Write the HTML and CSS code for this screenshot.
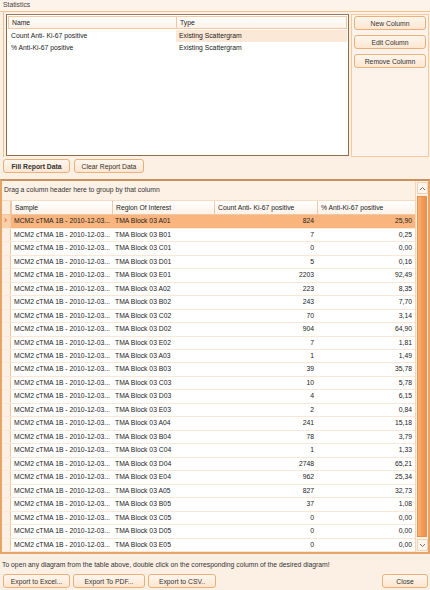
FILE: index.html
```html
<!DOCTYPE html>
<html>
<head>
<meta charset="utf-8">
<link rel="stylesheet" href="styles.css">
</head>
<body>
<div class="form">
  <div class="title">Statistics</div>
  <div class="stats">
    <div class="list">
      <div class="lhead">
        <div class="lh c-name">Name</div>
        <div class="lh c-type">Type</div>
      </div>
      <div class="lrow">
        <div class="lc c-name">Count Anti- Ki-67 positive</div>
        <div class="lc c-type focus">Existing Scattergram</div>
      </div>
      <div class="lrow">
        <div class="lc c-name">% Anti-Ki-67 positive</div>
        <div class="lc c-type">Existing Scattergram</div>
      </div>
    </div>
    <div class="side">
      <button class="btn side-btn">New Column</button>
      <button class="btn side-btn">Edit Column</button>
      <button class="btn side-btn">Remove Column</button>
    </div>
  </div>
  <div class="toolbar">
    <button class="btn bold w67">Fill Report Data</button>
    <button class="btn w70">Clear Report Data</button>
  </div>
  <div class="grid">
    <div class="gmain">
      <div class="groupby">Drag a column header here to group by that column</div>
      <div class="ghead">
        <div class="gi"></div>
        <div class="gh s">Sample</div>
        <div class="gh r">Region Of Interest</div>
        <div class="gh n">Count Anti- Ki-67 positive</div>
        <div class="gh p">% Anti-Ki-67 positive</div>
      </div>
      <div class="gbody" id="gbody"></div>
    </div>
    <div class="vscroll">
      <div class="arrow up"><svg width="7" height="5" viewBox="0 0 7 5"><path d="M1 4 L3.5 1.5 L6 4" fill="none" stroke="#7a6a5a" stroke-width="1"/></svg></div>
      <div class="thumb"></div>
      <div class="arrow down"><svg width="7" height="5" viewBox="0 0 7 5"><path d="M1 1 L3.5 3.5 L6 1" fill="none" stroke="#7a6a5a" stroke-width="1"/></svg></div>
    </div>
  </div>
  <div class="hint">To open any diagram from the table above, double click on the corresponding column of the desired diagram!</div>
  <div class="footer">
    <button class="btn w67">Export to Excel...</button>
    <button class="btn w72">Export To PDF...</button>
    <button class="btn w68">Export to CSV..</button>
    <div class="spacer"></div>
    <button class="btn w46">Close</button>
  </div>
</div>
<script>
var data = [
["A01",824,"25,90"],["B01",7,"0,25"],["C01",0,"0,00"],["D01",5,"0,16"],["E01",2203,"92,49"],
["A02",223,"8,35"],["B02",243,"7,70"],["C02",70,"3,14"],["D02",904,"64,90"],["E02",7,"1,81"],
["A03",1,"1,49"],["B03",39,"35,78"],["C03",10,"5,78"],["D03",4,"6,15"],["E03",2,"0,84"],
["A04",241,"15,18"],["B04",78,"3,79"],["C04",1,"1,33"],["D04",2748,"65,21"],["E04",962,"25,34"],
["A05",827,"32,73"],["B05",37,"1,08"],["C05",0,"0,00"],["D05",0,"0,00"],["E05",0,"0,00"]
];
var b = document.getElementById("gbody");
var h = "";
data.forEach(function(d, i){
  h += '<div class="grow' + (i===0?' sel':'') + '">' +
    '<div class="gi">' + (i===0?'<span class="ind">&#8250;</span>':'') + '</div>' +
    '<div class="gc s">MCM2 cTMA 1B - 2010-12-03...</div>' +
    '<div class="gc r">TMA Block 03 ' + d[0] + '</div>' +
    '<div class="gc n num">' + d[1] + '</div>' +
    '<div class="gc p num">' + d[2] + '</div></div>';
});
b.innerHTML = h;
</script>
</body>
</html>
```
FILE: styles.css
```css
* { box-sizing: border-box; }
html, body { margin: 0; padding: 0; }
body {
  width: 430px; height: 590px; overflow: hidden;
  background: #fcf0e5;
  font-family: "Liberation Sans", Arial, sans-serif;
  font-size: 6.8px;
  color: #222;
}
.form { display: flex; flex-direction: column; height: 590px; }
.title {
  height: 12px; line-height: 10px; padding-left: 3px; color: #444;
  border-bottom: 1px solid #f2c08e;
  background: #fdf3ea;
}
.stats {
  display: flex; height: 145px;
  margin: 0 1px 0 3px;
  border-left: 1px solid #f2c08e;
  padding: 2px 0 0 2px;
}
.list {
  width: 343px; height: 142px;
  border: 1px solid #8d6f50;
  border-top-color: #a07a55;
  background: #fff;
}
.lhead { display: flex; height: 13px; margin: 1px; border: 1px solid #f0c9a4; background: linear-gradient(#fff, #fdf1e6); }
.lh { line-height: 11px; padding-left: 3px; }
.c-name { width: 168px; }
.lh.c-name { border-right: 1px solid #f0c9a4; }
.c-type { flex: 1; }
.lrow { display: flex; height: 12px; margin: 0 1px; }
.lc { line-height: 12px; padding-left: 3px; }
.focus { background: #fce8d6; }
.side {
  flex: 1; margin-left: 2px;
  display: flex; flex-direction: column; align-items: center; gap: 5px;
  padding-top: 1px;
  background: #fef3ea;
  border: 1px solid #f7c99c;
}
.btn {
  font-family: inherit; font-size: 6.8px; color: #333;
  height: 14px; padding: 0;
  border: 1px solid #e9b07a; border-radius: 3px;
  background: linear-gradient(#fff6ee, #fde6d0);
  text-align: center;
}
.side-btn { width: 72px; }
.bold { font-weight: bold; }
.w67 { width: 67px; } .w70 { width: 70px; } .w72 { width: 72px; } .w68 { width: 68px; } .w46 { width: 46px; }
.toolbar { display: flex; gap: 4px; padding: 2px 0 0 3px; height: 22px; }
.grid {
  display: flex; height: 375px;
  border: 2px solid #e6a468;
  border-top-color: #c98f5c;
  background: #fff;
}
.gmain { flex: 1; display: flex; flex-direction: column; min-width: 0; }
.groupby {
  height: 21px; line-height: 18px; padding-left: 2px; color: #333;
  background: #fdf1e6;
  border-bottom: 1px solid #f5dcc3;
}
.ghead { display: flex; height: 14px; background: linear-gradient(#fff, #fdf2e8); border-bottom: 1px solid #f0c9a4; }
.gh { line-height: 13px; padding-left: 3px; border-left: 1px solid #f0c9a4; }
.gi { width: 9px; flex: none; background: #fdf0e3; border-right: 1px solid #f0c9a4; position: relative; }
.s { width: 101px; flex: none; }
.r { width: 102px; flex: none; }
.n { width: 103px; flex: none; }
.p { flex: 1; }
.gbody { flex: 1; }
.grow { display: flex; height: 13.48px; border-bottom: 1px solid #fbe7d6; }
.gc { line-height: 12.5px; padding-left: 3px; white-space: nowrap; overflow: hidden; }
.num { text-align: right; padding-right: 3px; }
.grow.sel .gc { background: #f9b57d; }
.grow.sel .gi { background: #fbd0a8; }
.ind { position: absolute; left: 2px; top: -1px; color: #d0401a; font-size: 9px; line-height: 13px; }
.vscroll {
  width: 13px; flex: none; display: flex; flex-direction: column; align-items: center;
  background: #fdf0e4; border-left: 1px solid #f5d6b8;
}
.arrow { width: 11px; height: 12px; display: flex; align-items: center; justify-content: center; background: #fef6ef; border: 1px solid #f3d3b3; margin: 1px 0; }
.thumb {
  flex: 1; width: 10px; margin: 1px 0;
  background: linear-gradient(90deg, #f7b27a, #f29a55 60%, #ee8f48);
  border: 1px solid #e9904a;
}
.hint { padding: 7px 0 0 2px; height: 20px; color: #333; }
.footer { display: flex; gap: 3px; padding: 0 2px 0 3px; }
.spacer { flex: 1; }
```
